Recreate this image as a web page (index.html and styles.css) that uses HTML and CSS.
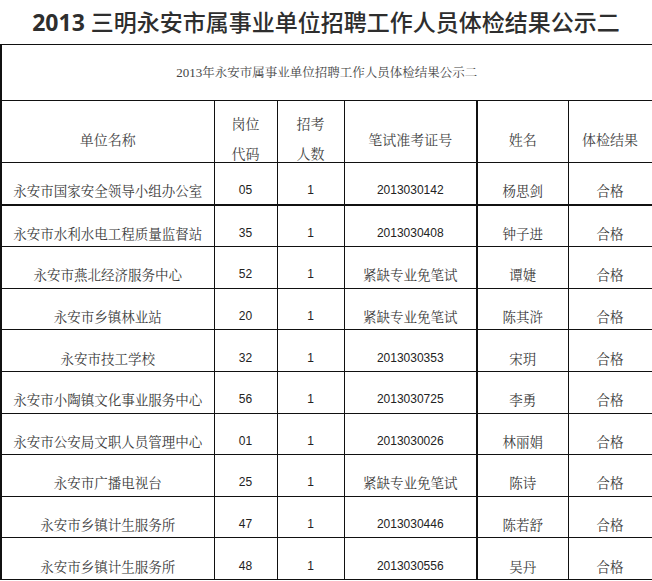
FILE: index.html
```html
<!DOCTYPE html>
<html lang="zh-CN">
<head>
<meta charset="utf-8">
<title>2013 三明永安市属事业单位招聘工作人员体检结果公示二</title>
<link rel="stylesheet" href="styles.css">
</head>
<body>
<h1 class="title"><span class="title-year">2013</span> 三明永安市属事业单位招聘工作人员体检结果公示二</h1>
<table class="sheet">
  <colgroup>
    <col class="c-unit"><col class="c-code"><col class="c-num"><col class="c-exam"><col class="c-name"><col class="c-result">
  </colgroup>
  <tr class="caption-row"><td colspan="6" class="caption"><span class="num">2013</span>年永安市属事业单位招聘工作人员体检结果公示二</td></tr>
  <tr class="head-row">
    <td class="one">单位名称</td>
    <td class="two"><div class="lines"><span>岗位</span><span>代码</span></div></td>
    <td class="two"><div class="lines"><span>招考</span><span>人数</span></div></td>
    <td class="one thick-r">笔试准考证号</td>
    <td class="one">姓名</td>
    <td class="one">体检结果</td>
  </tr>
  <tr class="row thick-b"><td>永安市国家安全领导小组办公室</td><td class="num">05</td><td class="num">1</td><td class="num thick-r">2013030142</td><td>杨思剑</td><td>合格</td></tr>
  <tr class="row"><td>永安市水利水电工程质量监督站</td><td class="num">35</td><td class="num">1</td><td class="num thick-r">2013030408</td><td>钟子进</td><td>合格</td></tr>
  <tr class="row"><td>永安市燕北经济服务中心</td><td class="num">52</td><td class="num">1</td><td class="thick-r">紧缺专业免笔试</td><td>谭婕</td><td>合格</td></tr>
  <tr class="row"><td>永安市乡镇林业站</td><td class="num">20</td><td class="num">1</td><td class="thick-r">紧缺专业免笔试</td><td>陈其浒</td><td>合格</td></tr>
  <tr class="row"><td>永安市技工学校</td><td class="num">32</td><td class="num">1</td><td class="num thick-r">2013030353</td><td>宋玥</td><td>合格</td></tr>
  <tr class="row"><td>永安市小陶镇文化事业服务中心</td><td class="num">56</td><td class="num">1</td><td class="num thick-r">2013030725</td><td>李勇</td><td>合格</td></tr>
  <tr class="row"><td>永安市公安局文职人员管理中心</td><td class="num">01</td><td class="num">1</td><td class="num thick-r">2013030026</td><td>林丽娟</td><td>合格</td></tr>
  <tr class="row"><td>永安市广播电视台</td><td class="num">25</td><td class="num">1</td><td class="thick-r">紧缺专业免笔试</td><td>陈诗</td><td>合格</td></tr>
  <tr class="row"><td>永安市乡镇计生服务所</td><td class="num">47</td><td class="num">1</td><td class="num thick-r">2013030446</td><td>陈若舒</td><td>合格</td></tr>
  <tr class="row"><td>永安市乡镇计生服务所</td><td class="num">48</td><td class="num">1</td><td class="num thick-r">2013030556</td><td>吴丹</td><td>合格</td></tr>
</table>
</body>
</html>
```
FILE: styles.css
```css
html, body {
  margin: 0;
  padding: 0;
  background: #fff;
}
body {
  font-family: "Noto Serif CJK SC", "Noto Sans CJK SC", sans-serif;
  color: #333;
}
.title {
  margin: 0;
  height: 44px;
  line-height: 44px;
  text-align: center;
  font-family: "Noto Sans", "Noto Sans CJK SC", sans-serif;
  font-size: 23px;
  font-weight: 500;
  color: #2e2e2e;
  white-space: nowrap;
}
.title-year {
  font-weight: 700;
}
.sheet {
  border-collapse: collapse;
  table-layout: fixed;
  width: 651px;
  margin: 0;
}
.c-unit { width: 213px; }
.c-code { width: 63px; }
.c-num { width: 67px; }
.c-exam { width: 133px; }
.c-name { width: 91px; }
.c-result { width: 84px; }
.sheet td {
  border: 1px solid #111;
  text-align: center;
  vertical-align: middle;
  padding: 14px 0 0 0;
  font-size: 13.5px;
  line-height: 16px;
  color: #3a3a3a;
  white-space: nowrap;
}
.sheet td:first-child {
  border-left: 2px solid #111;
}
.sheet td.caption {
  padding: 0;
  height: 55px;
  font-size: 12.5px;
  color: #444;
}
.caption .num {
  font-family: "Liberation Serif", serif;
  font-size: 13px;
}
.head-row td {
  height: 47px;
  font-size: 14px;
  color: #444;
}
.head-row td.two {
  padding-top: 14px;
  vertical-align: top;
}
.head-row .lines {
  display: flex;
  flex-direction: column;
  align-items: center;
  gap: 14px;
}
.row td {
  height: 26.6px;
}
.sheet td.num {
  font-family: "Liberation Sans", sans-serif;
  font-size: 12px;
  color: #222;
}
.sheet td.thick-r {
  border-right: 2px solid #111;
}
.thick-b td {
  border-bottom: 2px solid #111;
}
```
